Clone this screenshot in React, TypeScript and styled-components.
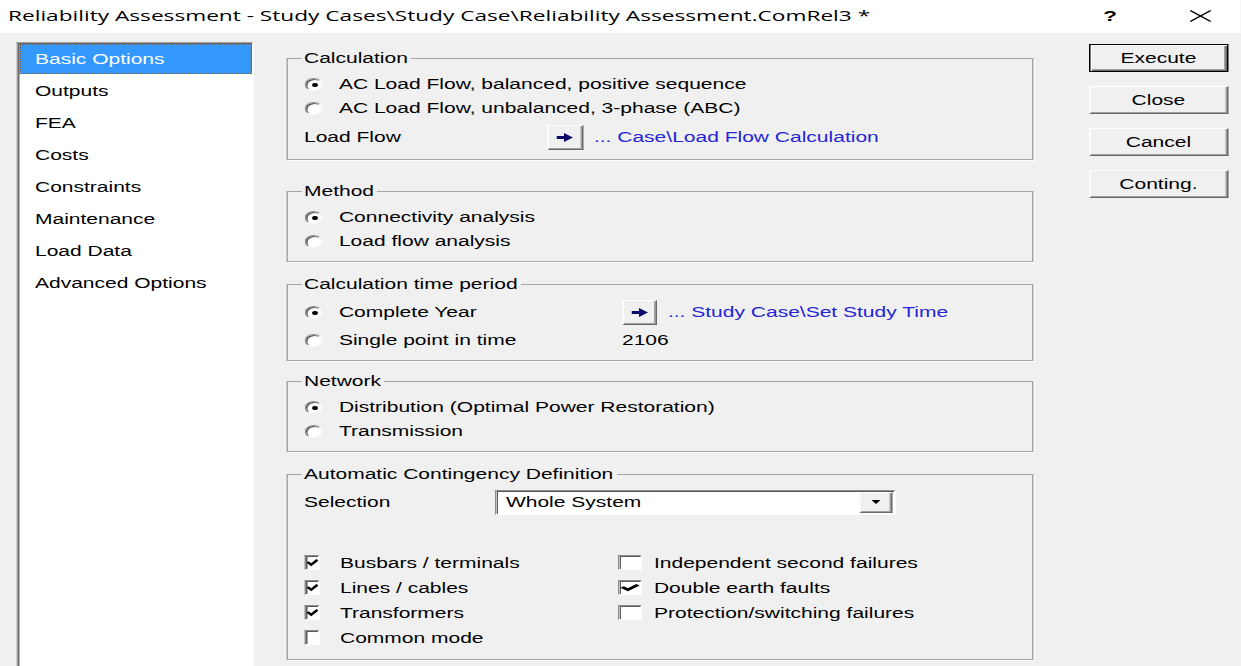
import React from 'react'
import styled, { createGlobalStyle } from 'styled-components'

// the dialog is laid out at its native width and stretched sideways as a whole
const STRETCH = 1.5
const WIDTH = 1241 / STRETCH

const GlobalStyle = createGlobalStyle`
  html, body {
    margin: 0;
    padding: 0;
    background: #f0f0f0;
    overflow: hidden;
  }
`

const Window = styled.div`
  width: ${WIDTH}px;
  height: 666px;
  transform: scaleX(${STRETCH});
  transform-origin: 0 0;
  display: flex;
  flex-direction: column;
  background: #f0f0f0;
  color: #000;
  font-family: 'Liberation Sans', Arial, sans-serif;
  font-size: 14px;
`

const TitleBar = styled.div`
  flex: none;
  height: 33px;
  display: flex;
  align-items: center;
  padding-left: 5.33px;
  background: #fff;
`

const Title = styled.div`
  flex: 1;
  white-space: nowrap;
  font-family: 'Open Sans', 'Liberation Sans', sans-serif;
  font-size: 15.1px;
  padding-bottom: 3px;
`

const Captions = styled.div`
  display: flex;
  gap: 14.67px;
  margin-right: 3.67px;
`

const CaptionButton = styled.div`
  width: 46px;
  height: 30px;
  display: flex;
  align-items: center;
  justify-content: center;
  font-size: 15px;
  font-weight: bold;
  padding-bottom: 2px;
`

const Body = styled.div`
  flex: 1;
  display: flex;
  align-items: flex-start;
  padding-left: 11.33px;
  overflow: hidden;
`

const PageList = styled.ul`
  flex: none;
  width: 157.33px;
  height: 640px;
  margin: 9px 0 0;
  padding: 1px 0 0;
  list-style: none;
  box-sizing: border-box;
  background: #fff;
  border: 1px solid;
  border-color: #a0a0a0 #fff #fff #a0a0a0;
  box-shadow: inset 1px 1px #696969;
`

const PageItem = styled.li<{ $selected?: boolean }>`
  height: 30px;
  margin: 0 0 2px 0.33px;
  padding-left: 10.67px;
  display: flex;
  align-items: center;
  white-space: nowrap;
  background: ${({ $selected }) => ($selected ? '#3399ff' : 'transparent')};
  color: ${({ $selected }) => ($selected ? '#fff' : '#000')};
  outline: ${({ $selected }) => ($selected ? '1px dotted #8a5a2a' : 'none')};
  outline-offset: -1px;
`

const Main = styled.div`
  flex: none;
  width: 498px;
  margin: 17px 0 0 22.67px;
`

const Group = styled.fieldset<{ $top?: number; $pb?: number }>`
  margin: ${({ $top }) => $top ?? 0}px 0 0;
  padding: 6px 8px ${({ $pb }) => $pb ?? 8}px 10.33px;
  min-width: 0;
  border: 1px solid #a6a6a6;
  box-shadow: 1px 1px 0 #fff;
`

const Legend = styled.legend`
  margin-left: -2px;
  padding: 0 2px;
  line-height: 16px;
  font-size: 14px;
`

const Row = styled.div<{ $h?: number; $top?: number }>`
  height: ${({ $h }) => $h ?? 24}px;
  margin-top: ${({ $top }) => $top ?? 0}px;
  display: flex;
  align-items: center;
  white-space: nowrap;
`

const SplitRow = styled.div<{ $h?: number; $col: number }>`
  height: ${({ $h }) => $h ?? 24}px;
  display: grid;
  grid-template-columns: ${({ $col }) => $col}px 1fr;
  align-items: center;
  white-space: nowrap;
`

const FieldLabel = styled.div<{ $w: number }>`
  flex: none;
  width: ${({ $w }) => $w}px;
`

const Option = styled.label`
  display: flex;
  align-items: center;
  white-space: nowrap;
`

const Radio = styled.span<{ $checked?: boolean }>`
  flex: none;
  width: 12px;
  height: 13px;
  margin: 0 10.67px 0 0.67px;
  box-sizing: border-box;
  border-radius: 50%;
  background: #fff;
  border: 1px solid;
  border-color: #8c8c8c #f6f6f6 #f6f6f6 #8c8c8c;
  box-shadow: inset 1px 1px #5a5a5a;
  display: flex;
  align-items: center;
  justify-content: center;

  &::after {
    content: '';
    display: ${({ $checked }) => ($checked ? 'block' : 'none')};
    width: 3.5px;
    height: 4px;
    border-radius: 50%;
    background: #000;
    margin: 1px 0 0 1px;
  }
`

const CheckSlot = styled.span`
  flex: none;
  width: 24px;
  display: flex;
  align-items: center;
`

const CheckBox = styled.span<{ $wide?: boolean }>`
  width: ${({ $wide }) => ($wide ? 16 : 10.67)}px;
  height: 15px;
  box-sizing: border-box;
  background: #fff;
  border: 1px solid;
  border-color: #8c8c8c #fff #fff #8c8c8c;
  box-shadow: inset 1px 1px #5a5a5a;
  display: flex;
  align-items: center;
  justify-content: center;
`

const CheckGrid = styled.div`
  margin-top: 34px;
  display: grid;
  grid-template-columns: 209.33px 1fr;
  grid-auto-rows: 25px;
  align-items: center;
  white-space: nowrap;
`

const ArrowButton = styled.button`
  flex: none;
  width: 23.33px;
  height: 25px;
  padding: 0;
  box-sizing: border-box;
  background: #f0f0f0;
  border: 1px solid;
  border-color: #fff #696969 #696969 #fff;
  box-shadow: inset -1px -1px #a0a0a0;
  display: flex;
  align-items: center;
  justify-content: center;
`

const Link = styled.span`
  margin-left: 7.33px;
  color: #2424d8;
`

const Combo = styled.div`
  width: 266.67px;
  height: 25px;
  box-sizing: border-box;
  display: flex;
  align-items: center;
  background: #fff;
  border: 1px solid;
  border-color: #8c8c8c #fff #fff #8c8c8c;
  box-shadow: inset 1px 1px #5a5a5a;
`

const ComboText = styled.span`
  flex: 1;
  padding-left: 6.33px;
`

const ComboButton = styled.span`
  width: 22.67px;
  height: 21px;
  margin-right: 0.33px;
  box-sizing: border-box;
  background: #f0f0f0;
  border: 1px solid;
  border-color: #fff #696969 #696969 #fff;
  box-shadow: inset -1px -1px #a0a0a0;
  display: flex;
  align-items: center;
  justify-content: center;
`

const Actions = styled.div`
  flex: none;
  width: 92.67px;
  margin: 11px 0 0 36.67px;
  display: flex;
  flex-direction: column;
  gap: 14px;
`

const ActionButton = styled.button<{ $default?: boolean }>`
  height: 28px;
  padding: 0;
  box-sizing: border-box;
  font-family: inherit;
  font-size: 14px;
  color: #000;
  background: #f0f0f0;
  border: 1px solid;
  border-color: ${({ $default }) => ($default ? '#000' : '#fff #696969 #696969 #fff')};
  box-shadow: ${({ $default }) =>
    $default ? 'inset 1px 1px #fff, inset -1px -1px #696969, inset -2px -2px #a0a0a0' : 'inset -1px -1px #a0a0a0'};
`

const ArrowIcon = () => (
  <svg width="11" height="9" viewBox="0 0 11 9" preserveAspectRatio="none">
    <rect x="0" y="3" width="6" height="3" fill="#0b0b6e" />
    <polygon points="5,0 11,4.5 5,9" fill="#0b0b6e" />
  </svg>
)

const CheckMark = () => (
  <svg width="100%" height="9" viewBox="0 0 10 9" preserveAspectRatio="none">
    <polyline points="1.2,4 4,6.8 8.8,1.8" fill="none" stroke="#000" strokeWidth="2.2" />
  </svg>
)

const CloseIcon = () => (
  <svg width="14.67" height="12" viewBox="0 0 14 12" preserveAspectRatio="none">
    <line x1="0.5" y1="0.5" x2="13.5" y2="11.5" stroke="#000" strokeWidth="1" />
    <line x1="13.5" y1="0.5" x2="0.5" y2="11.5" stroke="#000" strokeWidth="1" />
  </svg>
)

const DropIcon = () => (
  <svg width="6" height="4" viewBox="0 0 8 4" preserveAspectRatio="none">
    <polygon points="0,0 8,0 4,4" fill="#000" />
  </svg>
)

const RadioOption = ({ label, checked }: { label: string; checked?: boolean }) => (
  <Option>
    <Radio $checked={checked} />
    {label}
  </Option>
)

const CheckOption = ({ label, checked, wide }: { label: string; checked?: boolean; wide?: boolean }) => (
  <Option>
    <CheckSlot>
      <CheckBox $wide={wide}>{checked && <CheckMark />}</CheckBox>
    </CheckSlot>
    {label}
  </Option>
)

const pages = ['Basic Options', 'Outputs', 'FEA', 'Costs', 'Constraints', 'Maintenance', 'Load Data', 'Advanced Options']

export default function App() {
  return (
    <>
      <GlobalStyle />
      <Window>
        <TitleBar>
          <Title>Reliability Assessment - Study Cases\Study Case\Reliability Assessment.ComRel3 *</Title>
          <Captions>
            <CaptionButton>?</CaptionButton>
            <CaptionButton>
              <CloseIcon />
            </CaptionButton>
          </Captions>
        </TitleBar>

        <Body>
          <PageList>
            {pages.map((page, i) => (
              <PageItem key={page} $selected={i === 0}>
                {page}
              </PageItem>
            ))}
          </PageList>

          <Main>
            <Group>
              <Legend>Calculation</Legend>
              <Row>
                <RadioOption checked label="AC Load Flow, balanced, positive sequence" />
              </Row>
              <Row>
                <RadioOption label="AC Load Flow, unbalanced, 3-phase (ABC)" />
              </Row>
              <Row $h={28} $top={3}>
                <FieldLabel $w={162.67}>Load Flow</FieldLabel>
                <ArrowButton>
                  <ArrowIcon />
                </ArrowButton>
                <Link>... Case\Load Flow Calculation</Link>
              </Row>
            </Group>

            <Group $top={23}>
              <Legend>Method</Legend>
              <Row>
                <RadioOption checked label="Connectivity analysis" />
              </Row>
              <Row>
                <RadioOption label="Load flow analysis" />
              </Row>
            </Group>

            <Group $top={14} $pb={6}>
              <Legend>Calculation time period</Legend>
              <SplitRow $h={28} $col={212}>
                <RadioOption checked label="Complete Year" />
                <Row $h={28}>
                  <ArrowButton>
                    <ArrowIcon />
                  </ArrowButton>
                  <Link>... Study Case\Set Study Time</Link>
                </Row>
              </SplitRow>
              <SplitRow $h={28} $col={212}>
                <RadioOption label="Single point in time" />
                <span>2106</span>
              </SplitRow>
            </Group>

            <Group $top={12}>
              <Legend>Network</Legend>
              <Row>
                <RadioOption checked label="Distribution (Optimal Power Restoration)" />
              </Row>
              <Row>
                <RadioOption label="Transmission" />
              </Row>
            </Group>

            <Group $top={14} $pb={9}>
              <Legend>Automatic Contingency Definition</Legend>
              <Row $h={28}>
                <FieldLabel $w={127.33}>Selection</FieldLabel>
                <Combo>
                  <ComboText>Whole System</ComboText>
                  <ComboButton>
                    <DropIcon />
                  </ComboButton>
                </Combo>
              </Row>
              <CheckGrid>
                <CheckOption checked label="Busbars / terminals" />
                <CheckOption wide label="Independent second failures" />
                <CheckOption checked label="Lines / cables" />
                <CheckOption wide checked label="Double earth faults" />
                <CheckOption checked label="Transformers" />
                <CheckOption wide label="Protection/switching failures" />
                <CheckOption label="Common mode" />
              </CheckGrid>
            </Group>
          </Main>

          <Actions>
            <ActionButton $default>Execute</ActionButton>
            <ActionButton>Close</ActionButton>
            <ActionButton>Cancel</ActionButton>
            <ActionButton>Conting.</ActionButton>
          </Actions>
        </Body>
      </Window>
    </>
  )
}
